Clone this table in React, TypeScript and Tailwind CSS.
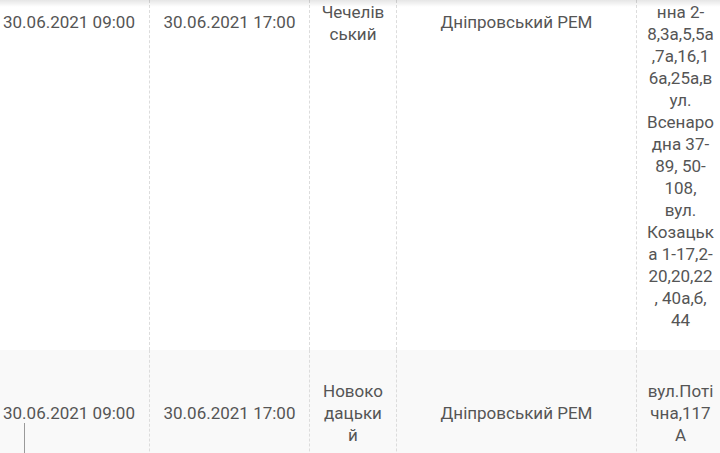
import React from "react";

const cellBorder = "border-r border-dashed border-[#dcdcdc]";

export default function App() {
  return (
    <div className="relative w-[720px] h-[453px] overflow-hidden bg-white font-['Roboto',sans-serif] text-[17px] leading-[22px] text-[#555555]">
      <div className="flex h-[350px]">
        <div className={`w-[150px] shrink-0 ${cellBorder} pl-[3px] pt-[11px] whitespace-nowrap`}>
          30.06.2021 09:00
        </div>
        <div className={`w-[160px] shrink-0 ${cellBorder} pt-[11px] text-center whitespace-nowrap`}>
          30.06.2021 17:00
        </div>
        <div className={`w-[87px] shrink-0 ${cellBorder} px-[10px] pt-[1px] text-center break-words`}>
          Чечелівський
        </div>
        <div className={`w-[240px] shrink-0 ${cellBorder} pt-[11px] text-center`}>
          Дніпровський РЕМ
        </div>
        <div className="w-[87px] shrink-0 px-[10px] pt-[1px] text-center break-words">
          нна 2-8,3а,5,5а,7а,16,16а,25а,вул. Всенародна 37-89, 50-108, вул. Козацька 1-17,2-20,20,22, 40а,б, 44
        </div>
      </div>
      <div className="flex h-[126px] bg-[#f9f9f9]">
        <div className={`w-[150px] shrink-0 ${cellBorder} pl-[3px] flex items-center whitespace-nowrap`}>
          30.06.2021 09:00
        </div>
        <div className={`w-[160px] shrink-0 ${cellBorder} flex items-center justify-center whitespace-nowrap`}>
          30.06.2021 17:00
        </div>
        <div className={`w-[87px] shrink-0 ${cellBorder} px-[10px] flex items-center justify-center`}>
          <span className="block w-full text-center break-words">Новокодацький</span>
        </div>
        <div className={`w-[240px] shrink-0 ${cellBorder} flex items-center justify-center`}>
          Дніпровський РЕМ
        </div>
        <div className="w-[87px] shrink-0 px-[10px] flex items-center justify-center">
          <span className="block w-full text-center break-words">вул.Потічна,117А</span>
        </div>
      </div>
      <div className="pointer-events-none absolute left-0 top-0 h-[7px] w-full bg-gradient-to-b from-black/10 to-transparent" />
      <div className="pointer-events-none absolute left-[24px] top-[423px] h-[30px] w-px bg-[#9a9a9a]" />
    </div>
  );
}
